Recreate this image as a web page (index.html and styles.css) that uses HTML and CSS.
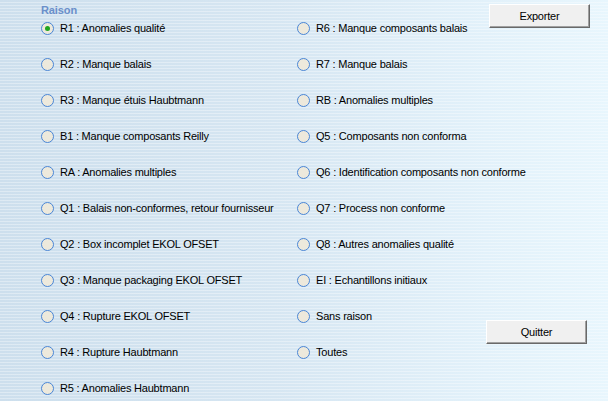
FILE: index.html
```html
<!DOCTYPE html>
<html lang="fr">
<head>
<meta charset="utf-8">
<title>Raison</title>
<link rel="stylesheet" href="styles.css">
</head>
<body>
<div class="form">
  <div class="group">
    <div class="legend">Raison</div>
    <div class="grid">
      <label class="opt"><span class="radio checked"></span>R1 : Anomalies qualité</label>
      <label class="opt"><span class="radio"></span>R6 : Manque composants balais</label>
      <label class="opt"><span class="radio"></span>R2 : Manque balais</label>
      <label class="opt"><span class="radio"></span>R7 : Manque balais</label>
      <label class="opt"><span class="radio"></span>R3 : Manque étuis Haubtmann</label>
      <label class="opt"><span class="radio"></span>RB : Anomalies multiples</label>
      <label class="opt"><span class="radio"></span>B1 : Manque composants Reilly</label>
      <label class="opt"><span class="radio"></span>Q5 : Composants non conforma</label>
      <label class="opt"><span class="radio"></span>RA : Anomalies multiples</label>
      <label class="opt"><span class="radio"></span>Q6 : Identification composants non conforme</label>
      <label class="opt"><span class="radio"></span>Q1 : Balais non-conformes, retour fournisseur</label>
      <label class="opt"><span class="radio"></span>Q7 : Process non conforme</label>
      <label class="opt"><span class="radio"></span>Q2 : Box incomplet EKOL OFSET</label>
      <label class="opt"><span class="radio"></span>Q8 : Autres anomalies qualité</label>
      <label class="opt"><span class="radio"></span>Q3 : Manque packaging EKOL OFSET</label>
      <label class="opt"><span class="radio"></span>EI : Echantillons initiaux</label>
      <label class="opt"><span class="radio"></span>Q4 : Rupture EKOL OFSET</label>
      <label class="opt"><span class="radio"></span>Sans raison</label>
      <label class="opt"><span class="radio"></span>R4 : Rupture Haubtmann</label>
      <label class="opt"><span class="radio"></span>Toutes</label>
      <label class="opt"><span class="radio"></span>R5 : Anomalies Haubtmann</label>
    </div>
  </div>
  <div class="actions">
    <button class="btn btn-export" type="button">Exporter</button>
    <button class="btn btn-quit" type="button">Quitter</button>
  </div>
</div>
</body>
</html>
```

FILE: styles.css
```css
html, body {
  margin: 0;
  padding: 0;
}
body {
  width: 608px;
  height: 401px;
  overflow: hidden;
  font-family: "Liberation Sans", Arial, sans-serif;
  font-size: 11px;
  color: #000;
  background:
    repeating-linear-gradient(180deg, rgba(255,255,255,0) 0px, rgba(255,255,255,0) 2px, rgba(255,255,255,0.35) 2px, rgba(255,255,255,0.35) 3px),
    linear-gradient(90deg, #cddfed 0%, #d6e6f2 45%, #e2f1fa 80%, #e8f6fd 100%);
}
.form {
  display: flex;
  height: 401px;
}
.group {
  box-sizing: border-box;
  padding: 4px 0 0 41px;
  width: 481px;
}
.legend {
  font-weight: bold;
  color: #6a8fca;
  font-size: 11px;
  letter-spacing: -0.1px;
  height: 15px;
  line-height: 13px;
}
.grid {
  display: grid;
  grid-template-columns: 256px 1fr;
  grid-auto-rows: 36px;
}
.opt {
  display: flex;
  align-items: center;
  height: 18px;
  letter-spacing: -0.2px;
  white-space: nowrap;
}
.radio {
  box-sizing: border-box;
  width: 13px;
  height: 13px;
  border-radius: 50%;
  border: 1px solid #4a86d6;
  background: #ede9dc;
  margin-right: 6px;
  display: flex;
  align-items: center;
  justify-content: center;
  flex: none;
}
.radio.checked::after {
  content: "";
  width: 5px;
  height: 5px;
  border-radius: 50%;
  background: #1fa51f;
}
.actions {
  display: flex;
  flex-direction: column;
  align-items: flex-start;
  padding-top: 4px;
}
.btn {
  box-sizing: border-box;
  width: 101px;
  height: 24px;
  padding: 0;
  font-family: "Liberation Sans", Arial, sans-serif;
  font-size: 11px;
  letter-spacing: -0.2px;
  color: #000;
  background: #f0f0f0;
  border: 1px solid;
  border-color: #ffffff #696969 #696969 #ffffff;
  box-shadow: inset -1px -1px 0 #a0a0a0;
}
.btn-export {
  margin-left: 8px;
}
.btn-quit {
  margin-left: 5px;
  margin-top: 292px;
}
```
